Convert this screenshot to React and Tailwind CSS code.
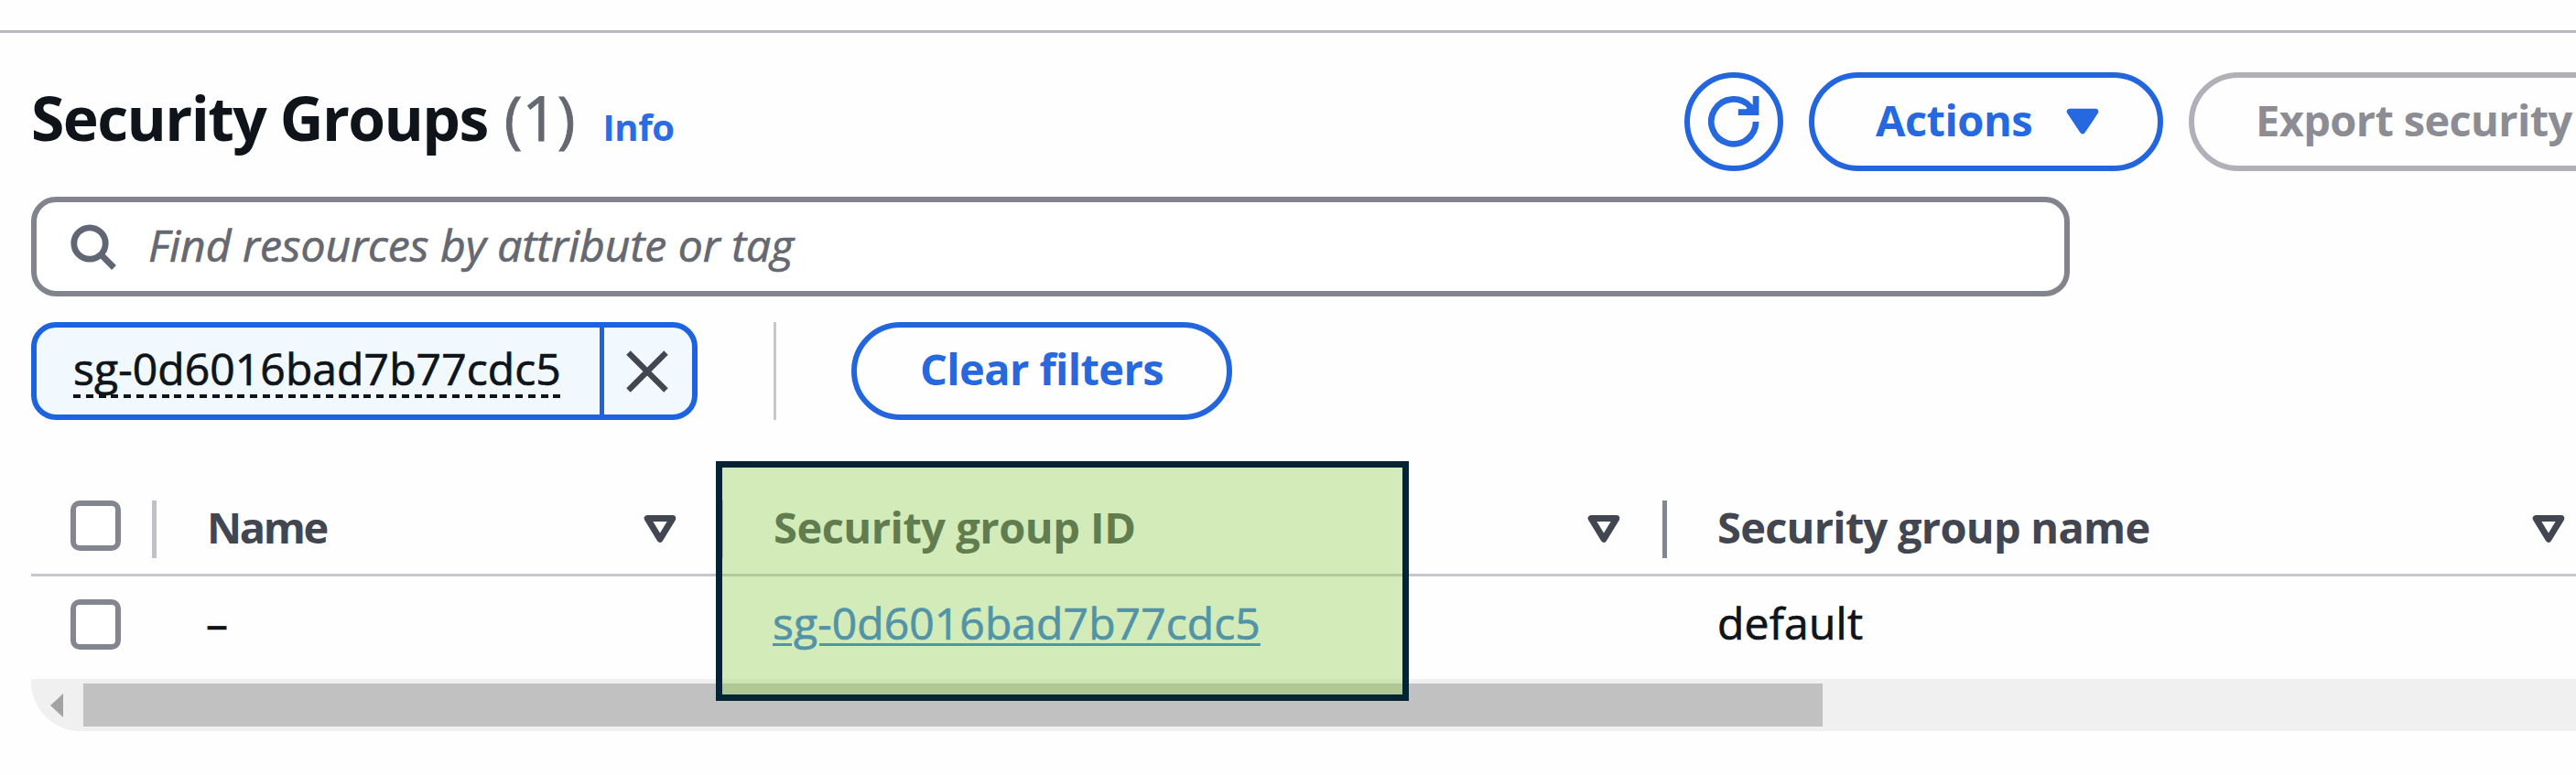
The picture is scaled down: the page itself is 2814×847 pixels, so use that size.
import React from "react";

function RefreshIcon() {
  return (
    <svg className="h-14 w-14" viewBox="0 0 56 56" fill="none" stroke="currentColor" strokeWidth="6.7">
      <path d="M52.1 28A24.4 24.4 0 1 1 45.5 11.2L51 17" />
      <path d="M52.1 0V17.6H32.8" />
      <path d="M43 12L52 8V17.6H40Z" fill="currentColor" stroke="none" />
    </svg>
  );
}

function SearchIcon() {
  return (
    <svg className="h-[52px] w-[52px] shrink-0 text-[#606674]" viewBox="0 0 52 52" fill="none" stroke="currentColor" strokeWidth="6.8">
      <circle cx="21" cy="22" r="17.2" />
      <path d="M33.2 34.2L47.5 48.5" />
    </svg>
  );
}

function CloseIcon() {
  return (
    <svg className="h-12 w-12 text-[#424650]" viewBox="0 0 48 48" fill="none" stroke="currentColor" strokeWidth="6.4">
      <path d="M3.5 3.5L44.5 44.5M44.5 3.5L3.5 44.5" />
    </svg>
  );
}

function CaretIcon({ filled }) {
  return (
    <svg
      className="h-8 w-9 shrink-0"
      viewBox="0 0 36 32"
      fill={filled ? "currentColor" : "none"}
      stroke="currentColor"
      strokeWidth={filled ? "6.6" : "7"}
      strokeLinejoin="round"
    >
      <path d={filled ? "M4 7H32L18 28Z" : "M4.2 4.6H31.8L18 27.2Z"} />
    </svg>
  );
}

function Checkbox() {
  return <span className="block h-[55px] w-[55px] shrink-0 rounded-[10px] border-[6px] border-[#84868f] bg-white" />;
}

function HeaderCell({ children, className, divider, textClass }) {
  return (
    <div className={`flex h-full items-center ${className}`}>
      <span className={`grow whitespace-nowrap pt-0.5 font-bold leading-[64px] ${textClass}`}>{children}</span>
      <span className="pt-[7px]">
        <CaretIcon />
      </span>
      {divider}
    </div>
  );
}

const columns = "grid grid-cols-[137px_619px_1031px_993px]";

export default function App() {
  return (
    <main className="relative flex h-[847px] w-[2814px] flex-col overflow-hidden bg-[#fefefe] font-['Open_Sans',sans-serif] text-[#0f141a]">
      <div className="mt-[33px] h-[3px] shrink-0 bg-[#b8b8c0]" />

      <header className="mt-[43px] flex h-[108px] shrink-0 justify-between pl-[34px]">
        <div className="flex items-baseline whitespace-nowrap leading-[98px]">
          <h1 className="text-[66px] font-bold tracking-[-1.6px]">Security Groups</h1>
          <span className="ml-[18px] text-[67px] text-[#656871] [-webkit-text-stroke:0.9px]">(1)</span>
          <a className="ml-[30px] text-[40px] font-bold tracking-[-0.4px] text-[#2a6ce3]">Info</a>
        </div>
        <div className="flex w-[974px] shrink-0 gap-7 overflow-hidden text-[47px] font-bold leading-[64px] text-[#2568df]">
          <button className="flex w-[108px] shrink-0 items-center justify-center rounded-full border-[6px] border-[#2265df]">
            <RefreshIcon />
          </button>
          <button className="flex w-[387px] shrink-0 items-center justify-between rounded-full border-[6px] border-[#2265df] pb-1 pl-[67px] pr-[64px]">
            <span className="tracking-[-0.5px]">Actions</span>
            <CaretIcon filled />
          </button>
          <button className="flex w-[800px] shrink-0 items-center whitespace-nowrap rounded-full border-[6px] border-[#b0b0b8] pb-1 pl-[67px] text-[#8c8c94]">
            <span className="tracking-[-0.65px]">Export security</span>
          </button>
        </div>
      </header>

      <div className="ml-[34px] mt-7 flex h-[109px] w-[2227px] shrink-0 items-center rounded-[27px] border-[6px] border-[#82848d] bg-white pl-[37px]">
        <SearchIcon />
        <span className="ml-[33px] pb-[3px] text-[48px] italic leading-[64px] text-[#656871] [-webkit-text-stroke:0.7px]">
          Find resources by attribute or tag
        </span>
      </div>

      <div className="ml-[34px] mt-7 flex h-[107px] shrink-0 items-stretch">
        <div className="flex w-[728px] items-stretch rounded-[27px] border-[6px] border-[#1d63e1] bg-[#f1f9ff]">
          <div className="flex w-[615px] flex-col pl-10">
            <span className="mt-3 h-[61px] w-[533px] whitespace-nowrap text-[48px] leading-[66px] tracking-[0.1px] [-webkit-text-stroke:0.7px]">
              sg-0d6016bad7b77cdc5
            </span>
            <span className="h-1 w-[533px] bg-[repeating-linear-gradient(90deg,#0f141a_0px,#0f141a_8px,transparent_8px,transparent_13.8px)]" />
          </div>
          <button className="flex grow items-center justify-center border-l-[5px] border-[#1d63e1] pr-0.5">
            <CloseIcon />
          </button>
        </div>
        <div className="ml-[83px] w-[3px] bg-[#c6c6cd]" />
        <button className="ml-[82px] flex w-[416px] items-center justify-center rounded-full border-[6px] border-[#2265df] pb-[5px] text-[47px] font-bold leading-[64px] tracking-[-0.6px] text-[#2568df]">
          Clear filters
        </button>
      </div>

      <section className="ml-[34px] mt-[63px] shrink-0 text-[47px]">
        <div className={`${columns} h-[108px] border-b-[3px] border-[#c6c6cd] text-[#424650]`}>
          <div className="flex items-center justify-between pl-[43px]">
            <Checkbox />
            <span className="mt-2 h-[63px] w-[5px] bg-[#c0c0c9]" />
          </div>
          <HeaderCell
            className="pl-[55px]"
            textClass="tracking-[-2.4px]"
            divider={<span className="ml-[46px] mt-2 h-[63px] w-[5px] bg-[#c0c0c9]" />}
          >
            Name
          </HeaderCell>
          <HeaderCell
            className="pl-[55px]"
            textClass="tracking-[-0.5px]"
            divider={<span className="ml-[46px] mt-2 h-[63px] w-[5px] bg-[#84868f]" />}
          >
            Security group ID
          </HeaderCell>
          <HeaderCell className="pl-[55px] pr-3" textClass="tracking-[-0.75px]">
            Security group name
          </HeaderCell>
        </div>
        <div className={`${columns} h-[112px] items-center pb-2 text-[48px] leading-[64px] [-webkit-text-stroke:0.7px]`}>
          <div className="pl-[43px]">
            <Checkbox />
          </div>
          <span className="pb-[3px] pl-[54px]">–</span>
          <a className="whitespace-nowrap pb-[3px] pl-[54px] tracking-[0.1px] text-[#2a6ce3] underline decoration-[3px] underline-offset-[4px]">
            sg-0d6016bad7b77cdc5
          </a>
          <span className="pb-[3px] pl-[55px] tracking-[0.2px]">default</span>
        </div>
        <div className="flex h-[57px] items-center rounded-bl-[54px] bg-[#f0f0f0]">
          <svg className="ml-[21px] h-[26px] w-3.5 text-[#a3a3a3]" viewBox="0 0 14 26" fill="currentColor">
            <path d="M14 0V26L0 13Z" />
          </svg>
          <div className="ml-[22px] h-[47px] w-[1900px] bg-[#c1c1c1]" />
        </div>
      </section>

      <div className="absolute left-[782px] top-[504px] h-[262px] w-[757px] border-[7px] border-[#042433] bg-[#92d050]/40" />
    </main>
  );
}
